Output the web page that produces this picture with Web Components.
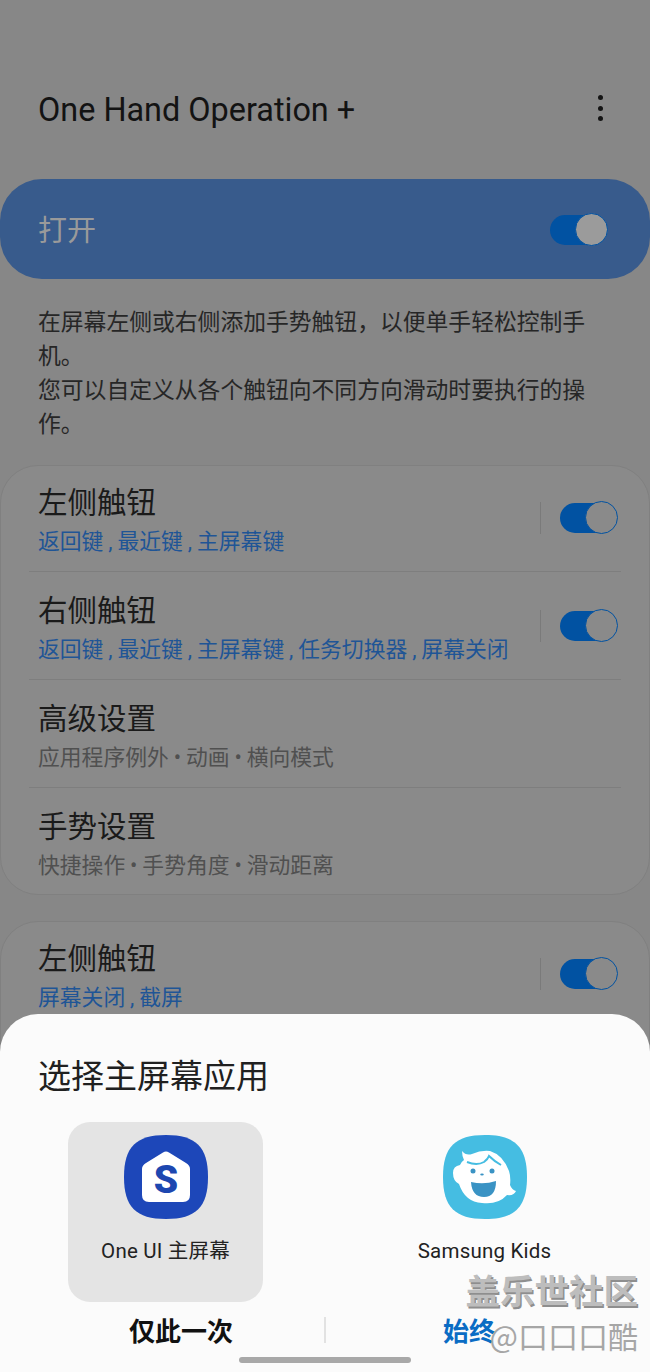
<!DOCTYPE html>
<html lang="zh"><head><meta charset="utf-8"><title>One Hand Operation +</title>
<style>
html,body{margin:0;padding:0;width:650px;height:1372px;overflow:hidden;background:#878787}
body{font-family:"Noto Sans CJK SC","Roboto",sans-serif}
</style></head><body>
<oh-app>
  <oh-appbar>One Hand Operation +</oh-appbar>
  <oh-master>打开</oh-master>
  <oh-desc>在屏幕左侧或右侧添加手势触钮&#xFF0C;以便单手轻松控制手<br>机。<br>您可以自定义从各个触钮向不同方向滑动时要执行的操<br>作。</oh-desc>
  <oh-card>
    <oh-row title="左侧触钮" sub="返回键 , 最近键 , 主屏幕键" toggle></oh-row>
    <oh-row title="右侧触钮" sub="返回键 , 最近键 , 主屏幕键 , 任务切换器 , 屏幕关闭" toggle></oh-row>
    <oh-row title="高级设置" sub="应用程序例外 • 动画 • 横向模式" muted></oh-row>
    <oh-row title="手势设置" sub="快捷操作 • 手势角度 • 滑动距离" muted last></oh-row>
  </oh-card>
  <oh-card second>
    <oh-row title="左侧触钮" sub="屏幕关闭 , 截屏" toggle last></oh-row>
  </oh-card>
  <oh-sheet>
    <oh-option label="One UI 主屏幕" selected>
      <svg width="84" height="84" viewBox="0 0 84 84">
        <path d="M42 0C72 0 84 12 84 42C84 72 72 84 42 84C12 84 0 72 0 42C0 12 12 0 42 0Z" fill="#1d47b9"/>
        <path d="M42 16.500Q43.500 16.500 45 17.500L62 28Q66 30.500 66 34V60Q66 67 59 67H25Q18 67 18 60V34Q18 30.500 22 28L39 17.500Q40.500 16.500 42 16.500Z" fill="#fff"/>
        <text x="42" y="58" text-anchor="middle" font-family="Roboto,sans-serif" font-weight="900" font-size="39" fill="#1d47b0">S</text>
      </svg>
    </oh-option>
    <oh-option label="Samsung Kids">
      <svg width="84" height="84" viewBox="0 0 84 84">
        <path d="M42 0C72 0 84 12 84 42C84 72 72 84 42 84C12 84 0 72 0 42C0 12 12 0 42 0Z" fill="#45bde2"/>
        <path d="M19 16Q23 21 29 19Q38 15 47 16Q60 20 66 36Q68 42 67 50Q69 55 73 56Q71 61 64 60Q55 70 39 68Q22 67 16 49Q10 46 10 38Q10 31 17 30Q18 27 21 25Q19 21 19 16Z" fill="#fff"/>
        <path d="M24 27Q34 31 41 27Q45 24 46 21Q51 26 58 30" fill="none" stroke="#45bde2" stroke-width="2"/>
        <circle cx="30" cy="36" r="2.500" fill="#3a93c4"/><circle cx="49" cy="36" r="2.500" fill="#3a93c4"/>
        <ellipse cx="39" cy="39.500" rx="1.800" ry="1" fill="#3a93c4"/>
        <path d="M28 47Q41 50 53 46Q53 62 41 62Q29 62 28 47Z" fill="#3a93c4"/>
      </svg>
    </oh-option>
  </oh-sheet>
  <oh-watermark></oh-watermark>
</oh-app>
<script>
function def(name, css, html){
  customElements.define(name, class extends HTMLElement{
    constructor(){super();this.attachShadow({mode:'open'});this._css=css;this._html=html;this._render();}
    _render(){this.shadowRoot.innerHTML='<style>'+this._css+'</style>'+(typeof this._html==='function'?'':this._html);}
    connectedCallback(){
      if(typeof this._html==='function') this.shadowRoot.innerHTML='<style>'+this._css+'</style>'+this._html(this);
    }
  });
}
const CJK='"Noto Sans CJK SC","Roboto",sans-serif';
def('oh-toggle',`
:host{display:block;position:relative;width:58px;height:34px}
.t{position:absolute;left:0;top:2px;width:50px;height:30px;border-radius:15px;background:#0152a2}
.k{position:absolute;right:0;top:0;width:31px;height:31px;border:1.500px solid #0152a2;border-radius:50%;background:var(--knob,#8a8a8a)}
`,'<div class="t"></div><div class="k"></div>');
def('oh-app',`:host{display:flex;flex-direction:column;position:relative;width:650px;height:1372px;overflow:hidden;background:#878787;font-family:${CJK}}`,'<slot></slot>');
def('oh-appbar',`
:host{display:flex;align-items:center;justify-content:space-between;height:179px;box-sizing:border-box;padding:0 47px 0 38px;color:#131313;font:400 32.400px Roboto,sans-serif}
.l{padding-top:41px}.m{display:flex;flex-direction:column;gap:5.500px;margin-top:37px}
.m i{width:5px;height:5px;border-radius:50%;background:#141414;display:block}
`,'<div class="l"><slot></slot></div><div class="m"><i></i><i></i><i></i></div>');
def('oh-master',`
:host{display:flex;align-items:center;justify-content:space-between;height:100px;margin:0;padding:0 42px 0 38px;border-radius:42px;background:#385b8c;color:#9a9a9a;font:400 29px ${CJK}}
span{margin-top:-2px}
oh-toggle{--knob:#9b9b9b;margin-top:2px}
`,'<span><slot></slot></span><oh-toggle></oh-toggle>');
def('oh-desc',`:host{display:block;margin:25px 38px 0;color:#262626;font:400 22.800px/34px ${CJK};height:137px}`,'<slot></slot>');
def('oh-card',`:host{display:block;margin:24px 0 0;background:#8a8a8a;border:1px solid #808080;border-radius:38px;box-sizing:border-box}
:host([second]){margin-top:26px;padding-bottom:60px}`,'<slot></slot>');
def('oh-row',`
:host{display:block;margin:0 28px;position:relative}
.w{display:flex;align-items:flex-start;justify-content:space-between;height:108px;padding-top:17px;border-bottom:1px solid #7e7e7e;box-sizing:border-box}
:host(:first-child) .w{height:106px;padding-top:15px}
:host([last]) .w{border-bottom-color:transparent;height:106px}
.tx{margin-left:9px}
.t{font:400 29.500px/38px ${CJK};color:#1a1a1a}
.s{font:400 21.800px/30px Roboto,${CJK};color:#1f5596;margin-top:8px;white-space:nowrap;word-spacing:-.5px}
:host([muted]) .s{color:#505050}
.r{display:flex;align-items:center;margin-right:3px;margin-top:20px}
.d{width:1px;height:32px;background:#7a7a7a;margin-right:19px}
`,h=>`<div class="w"><div class="tx"><div class="t">${h.getAttribute('title')}</div><div class="s">${h.getAttribute('sub')}</div></div>${h.hasAttribute('toggle')?'<div class="r"><div class="d"></div><oh-toggle></oh-toggle></div>':''}</div>`);
def('oh-sheet',`
:host{position:absolute;left:0;right:0;bottom:0;height:358px;box-sizing:border-box;background:#fbfbfb;border-radius:38px 38px 0 0;font-family:${CJK}}
h2{margin:0;padding:37px 38px 0;font:400 33px/46px ${CJK};color:#202020;height:71px}
.g{display:grid;grid-template-columns:319px 319px;padding:0 6px}
.g ::slotted(*){justify-self:center}
.b{display:flex;align-items:center;padding:0 38px;margin-top:9px;height:38px}
.b span{flex:1;text-align:center;font:700 26px/38px ${CJK};color:#111}
.b span.a{color:#0a6cc4}
.b i{width:2px;height:26px;background:#e2e2e2}
.h{position:absolute;left:239px;bottom:9px;width:172px;height:6px;border-radius:3px;background:#a8a8a8}
`,'<h2>选择主屏幕应用</h2><div class="g"><slot></slot></div><div class="b"><span>仅此一次</span><i></i><span class="a">始终</span></div><div class="h"></div>');
def('oh-option',`
:host{display:flex;flex-direction:column;align-items:center;width:195px;height:180px;box-sizing:border-box;padding-top:13px;border-radius:22px;color:#222;font:400 20.500px/26px Roboto,${CJK}}
:host([selected]){background:#e4e4e4}
.l{margin-top:19px;white-space:nowrap;letter-spacing:.2px}
`,h=>`<slot></slot><div class="l">${h.getAttribute('label')}</div>`);
def('oh-watermark',`
:host{position:absolute;right:12px;bottom:19px;display:block;text-align:right;pointer-events:none}
.a{font:700 34.500px/40px ${CJK};color:#bdbdbd;text-shadow:1.500px 1.500px 0 #8e8e8e;white-space:nowrap}
.b{font:400 30px/36px ${CJK};color:#a6a6a6;margin-top:8px;white-space:nowrap}
`,'<div class="a">盖乐世社区</div><div class="b">@口口口酷</div>');
</script>
</body></html>
